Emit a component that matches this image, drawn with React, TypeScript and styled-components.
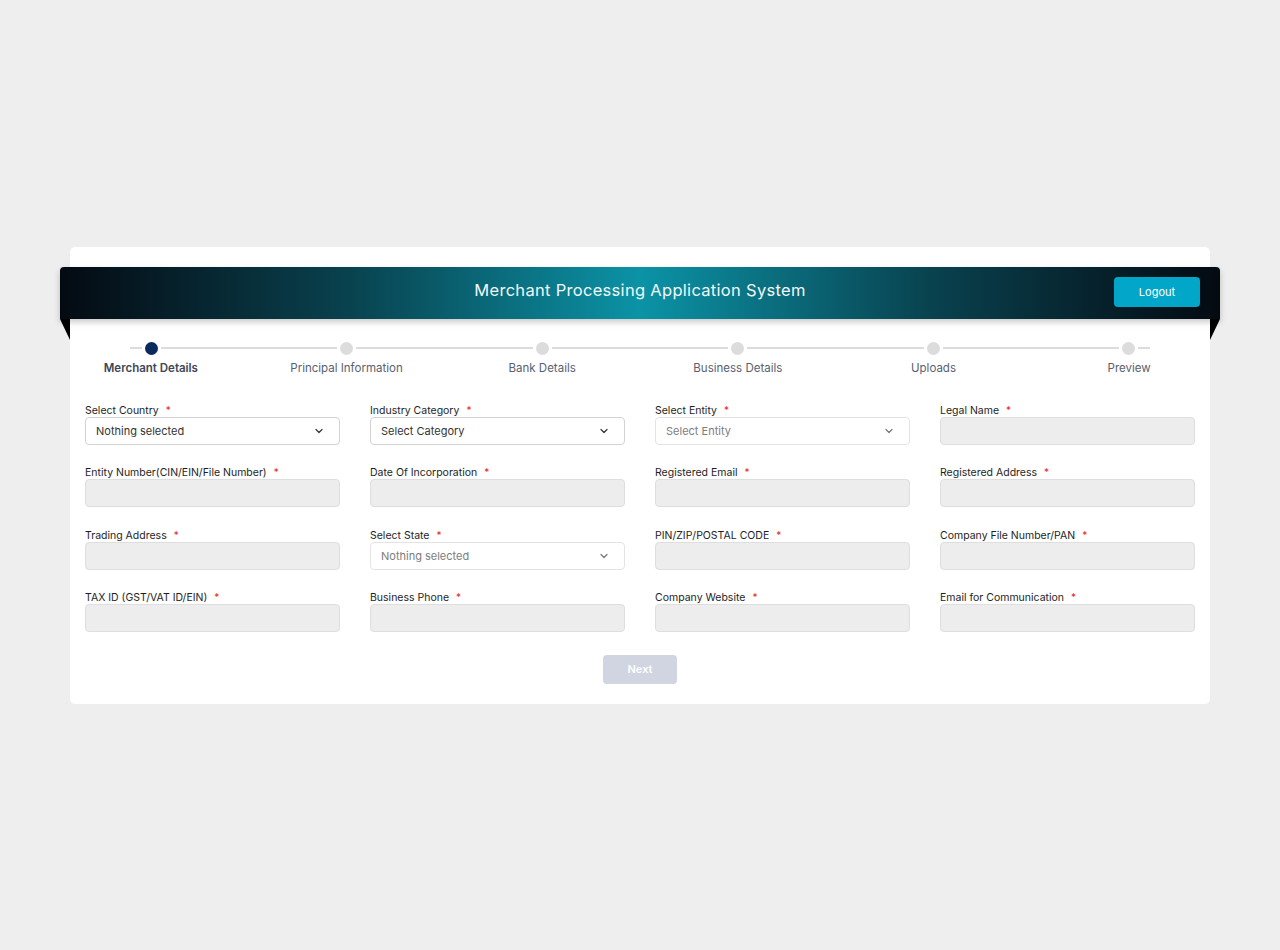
import React from "react";
import styled, { createGlobalStyle } from "styled-components";

const GlobalStyle = createGlobalStyle`
  * { box-sizing: border-box; }
  body {
    margin: 0;
    background: #eeeeee;
    font-family: "Inter", "Open Sans", sans-serif;
  }
`;

const steps = [
  "Merchant Details",
  "Principal Information",
  "Bank Details",
  "Business Details",
  "Uploads",
  "Preview",
];

type Field = {
  label: string;
  kind: "input" | "select";
  placeholder?: string;
  muted?: boolean;
};

const fields: Field[] = [
  { label: "Select Country", kind: "select", placeholder: "Nothing selected" },
  { label: "Industry Category", kind: "select", placeholder: "Select Category" },
  { label: "Select Entity", kind: "select", placeholder: "Select Entity", muted: true },
  { label: "Legal Name", kind: "input" },
  { label: "Entity Number(CIN/EIN/File Number)", kind: "input" },
  { label: "Date Of Incorporation", kind: "input" },
  { label: "Registered Email", kind: "input" },
  { label: "Registered Address", kind: "input" },
  { label: "Trading Address", kind: "input" },
  { label: "Select State", kind: "select", placeholder: "Nothing selected", muted: true },
  { label: "PIN/ZIP/POSTAL CODE", kind: "input" },
  { label: "Company File Number/PAN", kind: "input" },
  { label: "TAX ID (GST/VAT ID/EIN)", kind: "input" },
  { label: "Business Phone", kind: "input" },
  { label: "Company Website", kind: "input" },
  { label: "Email for Communication", kind: "input" },
];

const Chevron = () => (
  <svg width="12" height="12" viewBox="0 0 24 24" fill="none" stroke="currentColor" strokeWidth="2.4" strokeLinecap="round" strokeLinejoin="round">
    <path d="M6 9l6 6 6-6" />
  </svg>
);

const App: React.FC = () => {
  return (
    <>
      <GlobalStyle />
      <Page>
        <Card>
          <Banner>
            <Title>Merchant Processing Application System</Title>
            <LogoutButton>Logout</LogoutButton>
          </Banner>

          <Stepper>
            <Track>
              <EndLine />
              {steps.map((s, i) => (
                <React.Fragment key={s}>
                  <Dot active={i === 0} />
                  {i < steps.length - 1 && <Line />}
                </React.Fragment>
              ))}
              <EndLine />
            </Track>
            <Labels>
              {steps.map((s, i) => (
                <StepLabel key={s} active={i === 0}>
                  {s}
                </StepLabel>
              ))}
            </Labels>
          </Stepper>

          <Form>
            {fields.map((f) => (
              <FieldBox key={f.label}>
                <Label>
                  {f.label}
                  <Star>*</Star>
                </Label>
                {f.kind === "select" ? (
                  <SelectBox muted={f.muted}>
                    <span>{f.placeholder}</span>
                    <Chevron />
                  </SelectBox>
                ) : (
                  <TextInput />
                )}
              </FieldBox>
            ))}
          </Form>

          <Actions>
            <NextButton>Next</NextButton>
          </Actions>
        </Card>
      </Page>
    </>
  );
};

export default App;

const Page = styled.div`
  width: 1280px;
  min-height: 950px;
  padding: 247px 70px 0;
`;

const Card = styled.div`
  background: #fff;
  border-radius: 5px;
  padding: 20px 15px 20px;
`;

const Banner = styled.div`
  position: relative;
  margin: 0 -25px;
  height: 52px;
  display: flex;
  align-items: center;
  justify-content: center;
  border-radius: 4px 4px 0 0;
  background: linear-gradient(90deg, #040a12 0%, #09424f 25%, #0b93a6 50%, #09424f 75%, #040a12 100%);
  box-shadow: 0 3px 6px rgba(0, 0, 0, 0.22);

  &::before,
  &::after {
    content: "";
    position: absolute;
    top: 52px;
    width: 0;
    height: 0;
    border-style: solid;
  }
  &::before {
    left: 0;
    border-width: 0 10px 21px 0;
    border-color: transparent #000 transparent transparent;
  }
  &::after {
    right: 0;
    border-width: 21px 10px 0 0;
    border-color: #000 transparent transparent transparent;
  }
`;

const Title = styled.div`
  color: #f2f7f8;
  font-size: 16.5px;
  font-weight: 400;
  letter-spacing: 0.3px;
  margin-bottom: 6px;
`;

const LogoutButton = styled.button`
  position: absolute;
  right: 20px;
  top: 10px;
  width: 86px;
  height: 30px;
  border: none;
  border-radius: 4px;
  background: #02a6c8;
  color: #fff;
  font-family: inherit;
  font-size: 11px;
  cursor: pointer;
`;

const Stepper = styled.div`
  margin: 23px -32px 0;
`;

const Track = styled.div`
  display: flex;
  align-items: center;
  padding: 0 77px;
  height: 12px;
`;

const EndLine = styled.div`
  width: 12px;
  height: 2px;
  background: #dcdcdc;
`;

const Line = styled.div`
  flex: 1;
  height: 2px;
  background: #dcdcdc;
`;

const Dot = styled.div<{ active?: boolean }>`
  width: 13px;
  height: 13px;
  border-radius: 50%;
  margin: 0 3px;
  flex-shrink: 0;
  background: ${(p) => (p.active ? "#0a2a5e" : "#dcdcdc")};
`;

const Labels = styled.div`
  display: grid;
  grid-template-columns: repeat(6, 1fr);
  margin-top: 7px;
`;

const StepLabel = styled.div<{ active?: boolean }>`
  text-align: center;
  font-size: 11.5px;
  color: ${(p) => (p.active ? "#3e4658" : "#5a6070")};
  font-weight: ${(p) => (p.active ? 600 : 400)};
`;

const Form = styled.div`
  display: grid;
  grid-template-columns: repeat(4, 1fr);
  column-gap: 30px;
  row-gap: 20.3px;
  margin-top: 28px;
`;

const FieldBox = styled.div`
  display: flex;
  flex-direction: column;
`;

const Label = styled.label`
  font-size: 10.5px;
  color: #1e1e1e;
  height: 14px;
  line-height: 14px;
  white-space: nowrap;
`;

const Star = styled.span`
  color: #e3262c;
  margin-left: 7px;
  font-size: 10px;
`;

const TextInput = styled.div`
  height: 28px;
  border: 1px solid #dedede;
  border-radius: 4px;
  background: #ededed;
`;

const SelectBox = styled.div<{ muted?: boolean }>`
  height: 28px;
  border: 1px solid ${(p) => (p.muted ? "#e4e4e4" : "#d2d2d2")};
  border-radius: 4px;
  background: #fff;
  display: flex;
  align-items: center;
  justify-content: space-between;
  padding: 0 14px 0 10px;
  font-size: 11px;
  color: ${(p) => (p.muted ? "#7d7d7d" : "#333")};

  svg {
    color: ${(p) => (p.muted ? "#777" : "#333")};
  }
`;

const Actions = styled.div`
  display: flex;
  justify-content: center;
  margin-top: 23px;
`;

const NextButton = styled.button`
  width: 74px;
  height: 29px;
  border: none;
  border-radius: 4px;
  background: #d0d5e1;
  color: #fff;
  font-family: inherit;
  font-size: 11px;
  font-weight: 600;
`;
